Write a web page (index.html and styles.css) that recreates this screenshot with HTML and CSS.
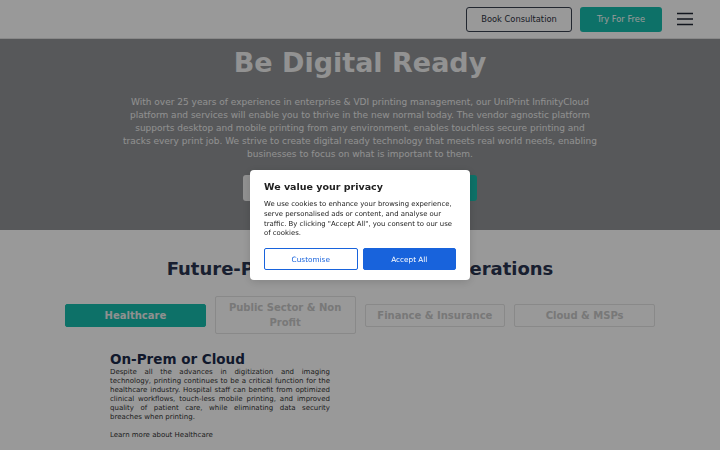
FILE: index.html
```html
<!DOCTYPE html>
<html lang="en">
<head>
  <meta charset="UTF-8">
  <meta name="viewport" content="width=device-width, initial-scale=1.0">
  <title>UniPrint InfinityCloud</title>
  <link rel="stylesheet" href="styles.css">
</head>
<body>
  <header class="site-header">
    <div class="header-actions">
      <a class="btn btn-outline" href="#">Book Consultation</a>
      <a class="btn btn-teal" href="#">Try For Free</a>
      <button class="menu-toggle" aria-label="Menu">
        <svg width="18" height="14" viewBox="0 0 18 14">
          <path d="M1 1.5h16M1 7h16M1 12.5h16" stroke="#1f2533" stroke-width="1.6" fill="none"/>
        </svg>
      </button>
    </div>
  </header>

  <section class="hero">
    <h1>Be Digital Ready</h1>
    <p>With over 25 years of experience in enterprise &amp; VDI printing management, our UniPrint InfinityCloud platform and services will enable you to thrive in the new normal today. The vendor agnostic platform supports desktop and mobile printing from any environment, enables touchless secure printing and tracks every print job. We strive to create digital ready technology that meets real world needs, enabling businesses to focus on what is important to them.</p>
    <div class="hero-actions">
      <a class="btn btn-light" href="#">Book a Consultation</a>
      <a class="btn btn-teal" href="#">Start Your Free Trial</a>
    </div>
  </section>

  <section class="industries">
    <h2>Future-Proof Your Printing Operations</h2>
    <div class="tabs">
      <button class="tab active">Healthcare</button>
      <button class="tab">Public Sector &amp; Non Profit</button>
      <button class="tab">Finance &amp; Insurance</button>
      <button class="tab">Cloud &amp; MSPs</button>
    </div>
    <div class="tab-panel">
      <h3>On-Prem or Cloud</h3>
      <p>Despite all the advances in digitization and imaging technology, printing continues to be a critical function for the healthcare industry. Hospital staff can benefit from optimized clinical workflows, touch-less mobile printing, and improved quality of patient care, while eliminating data security breaches when printing.</p>
      <a class="panel-link" href="#">Learn more about Healthcare</a>
    </div>
  </section>

  <div class="cookie-overlay">
    <div class="cookie-box">
      <h4>We value your privacy</h4>
      <p>We use cookies to enhance your browsing experience, serve personalised ads or content, and analyse our traffic. By clicking "Accept All", you consent to our use of cookies.</p>
      <div class="cookie-buttons">
        <button class="cookie-btn cookie-customise">Customise</button>
        <button class="cookie-btn cookie-accept">Accept All</button>
      </div>
    </div>
  </div>
</body>
</html>
```

FILE: styles.css
```css
* {
  box-sizing: border-box;
}
body {
  margin: 0;
  font-family: "DejaVu Sans", sans-serif;
  background: #fff;
  color: #1f2533;
  overflow: hidden;
}
a {
  text-decoration: none;
}
.btn {
  display: inline-flex;
  align-items: center;
  justify-content: center;
  height: 25px;
  padding: 0;
  border-radius: 3px;
  font-size: 8.3px;
  white-space: nowrap;
}
.btn-outline {
  border: 1px solid #3a4150;
  color: #2b3140;
  background: #fff;
}
.btn-teal {
  background: #17bdad;
  color: #fff;
}
.btn-light {
  background: #f2f2f2;
  color: #333;
}

/* header */
.site-header {
  height: 39px;
  border-bottom: 1px solid #e3e3e3;
  display: flex;
  justify-content: flex-end;
  align-items: center;
  padding: 0 26px 0 0;
}
.header-actions {
  display: flex;
  align-items: center;
  gap: 8px;
}
.header-actions .btn-outline {
  width: 106px;
}
.header-actions .btn-teal {
  width: 82px;
}
.menu-toggle {
  background: none;
  border: none;
  padding: 0;
  margin-left: 6px;
  display: flex;
}

/* hero */
.hero {
  background: #919396;
  height: 191px;
  text-align: center;
  padding: 8px 0 0;
  color: #fff;
}
.hero h1 {
  margin: 0;
  font-size: 27px;
  line-height: 32px;
  color: #f3f3f3;
}
.hero p {
  width: 480px;
  margin: 17px auto 0;
  font-size: 9px;
  line-height: 13px;
  color: #f0f0f0;
}
.hero-actions {
  display: flex;
  justify-content: center;
  gap: 8px;
  margin-top: 14px;
}
.hero-actions .btn {
  width: 113px;
  height: 26px;
}

/* industries */
.industries {
  padding: 27px 0 0;
}
.industries h2 {
  margin: 0;
  text-align: center;
  font-size: 18px;
  line-height: 24px;
  color: #2a3550;
}
.tabs {
  width: 590px;
  margin: 15px auto 0;
  display: grid;
  grid-template-columns: repeat(4, 1fr);
  gap: 9px;
  align-items: center;
}
.tab {
  font-family: "DejaVu Sans", sans-serif;
  font-weight: bold;
  font-size: 10px;
  line-height: 15px;
  color: #c9c9c9;
  background: #fff;
  border: 1px solid #e4e4e4;
  border-radius: 2px;
  padding: 3px 6px;
  min-height: 23px;
}
.tab.active {
  background: #17bdad;
  border-color: #17bdad;
  color: #f0f0f0;
}
.tab-panel {
  width: 220px;
  margin: 17px 0 0 110px;
}
.tab-panel h3 {
  margin: 0;
  font-size: 13.5px;
  line-height: 16px;
  color: #1c2a4a;
}
.tab-panel p {
  margin: 1px 0 0;
  font-size: 7px;
  line-height: 9px;
  text-align: justify;
  color: #333;
}
.panel-link {
  display: block;
  margin-top: 9px;
  font-size: 7px;
  color: #333;
}

/* cookie consent */
.cookie-overlay {
  position: fixed;
  inset: 0;
  background: rgba(0, 0, 0, 0.4);
  display: flex;
  justify-content: center;
  align-items: flex-start;
  padding-top: 170px;
}
.cookie-box {
  width: 220px;
  background: #fff;
  border-radius: 4px;
  padding: 11px 14px 10px;
  box-shadow: 0 2px 10px rgba(0, 0, 0, 0.15);
}
.cookie-box h4 {
  margin: 0;
  font-size: 9.5px;
  line-height: 12px;
  color: #212121;
}
.cookie-box p {
  margin: 7px 0 0;
  font-size: 6.9px;
  line-height: 9.8px;
  color: #212121;
}
.cookie-buttons {
  display: flex;
  gap: 5px;
  margin-top: 9px;
}
.cookie-btn {
  flex: 1;
  height: 22px;
  font-family: "DejaVu Sans", sans-serif;
  font-size: 7.3px;
  border-radius: 2px;
  border: 1px solid #1863dc;
}
.cookie-customise {
  background: #fff;
  color: #1863dc;
}
.cookie-accept {
  background: #1863dc;
  color: #fff;
}
```
